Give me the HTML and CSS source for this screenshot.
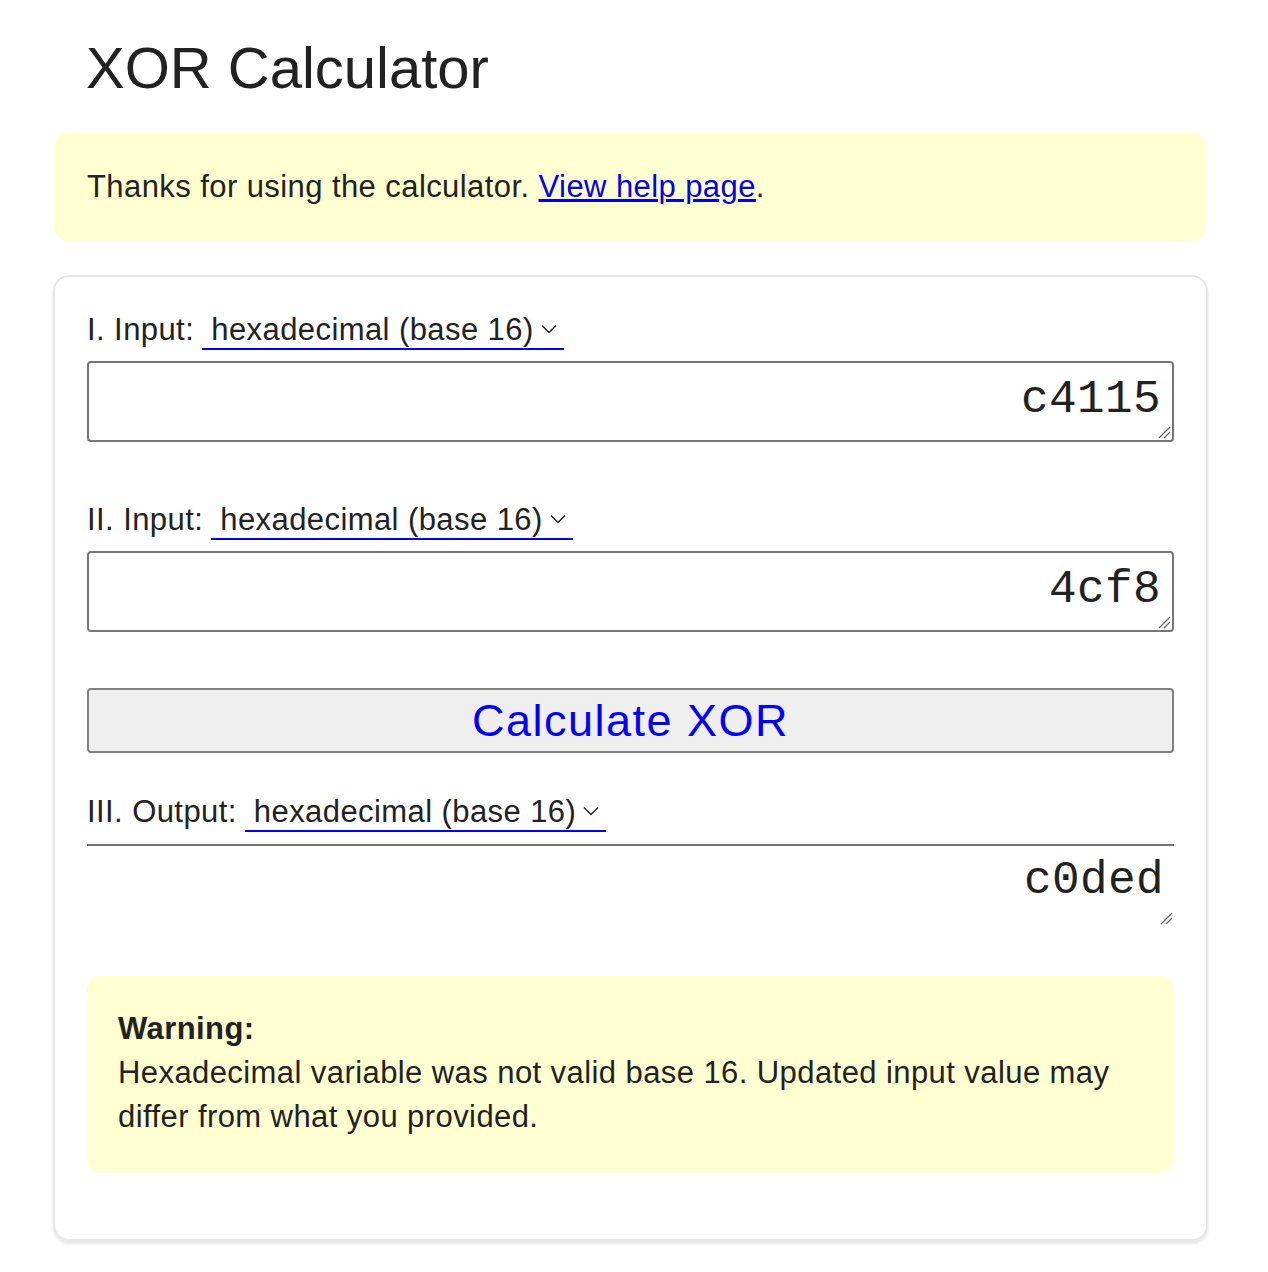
FILE: index.html
```html
<!DOCTYPE html>
<html lang="en">
<head>
<meta charset="utf-8">
<title>XOR Calculator</title>
<link rel="stylesheet" href="styles.css">
</head>
<body>
<main class="page">
  <h1 class="title">XOR Calculator</h1>
  <div class="notice">Thanks for using the calculator. <a href="#" class="link">View help page</a>.</div>
  <section class="card">
    <div class="field-row">
      <span class="label">I. Input:</span>
      <span class="select">hexadecimal (base 16)<svg class="chev" width="16" height="10" viewBox="0 0 16 10"><polyline points="1,1.5 8,8.5 15,1.5" fill="none" stroke="#222" stroke-width="1.5"/></svg></span>
    </div>
    <div class="box-wrap">
      <textarea class="box" spellcheck="false">c4115</textarea>
      <svg class="grip" width="14" height="14" viewBox="0 0 14 14"><path d="M13 2 L2 13 M13 7 L7 13" stroke="#6b6b6b" stroke-width="1.4"/></svg>
    </div>

    <div class="field-row second">
      <span class="label">II. Input:</span>
      <span class="select">hexadecimal (base 16)<svg class="chev" width="16" height="10" viewBox="0 0 16 10"><polyline points="1,1.5 8,8.5 15,1.5" fill="none" stroke="#222" stroke-width="1.5"/></svg></span>
    </div>
    <div class="box-wrap">
      <textarea class="box" spellcheck="false">4cf8</textarea>
      <svg class="grip" width="14" height="14" viewBox="0 0 14 14"><path d="M13 2 L2 13 M13 7 L7 13" stroke="#6b6b6b" stroke-width="1.4"/></svg>
    </div>

    <button class="calc" type="button">Calculate XOR</button>

    <div class="field-row third">
      <span class="label">III. Output:</span>
      <span class="select">hexadecimal (base 16)<svg class="chev" width="16" height="10" viewBox="0 0 16 10"><polyline points="1,1.5 8,8.5 15,1.5" fill="none" stroke="#222" stroke-width="1.5"/></svg></span>
    </div>
    <div class="box-wrap">
      <textarea class="output" spellcheck="false" readonly>c0ded</textarea>
      <svg class="grip out" width="14" height="14" viewBox="0 0 14 14"><path d="M13 2 L2 13 M13 7 L7 13" stroke="#6b6b6b" stroke-width="1.4"/></svg>
    </div>

    <div class="warning">
      <strong class="warn-title">Warning:</strong><br>
      Hexadecimal variable was not valid base 16. Updated input value may differ from what you provided.
    </div>
  </section>
</main>
</body>
</html>
```

FILE: styles.css
```css
* { box-sizing: border-box; }

body {
  margin: 0;
  background: #ffffff;
  color: #222222;
  font-family: "Liberation Sans", Arial, sans-serif;
}

.page {
  margin-left: 53px;
  width: 1155px;
  padding-bottom: 30px;
  letter-spacing: 0.42px;
}

.title {
  margin: 34px 0 0 0;
  padding-left: 33px;
  font-size: 58px;
  font-weight: 400;
  line-height: 67px;
  letter-spacing: 0;
  color: #222222;
}

.notice {
  margin: 32px 2px 0 1px;
  padding: 32px 33px;
  background: #ffffd1;
  border-radius: 14px;
  font-size: 31px;
  line-height: 44px;
}

.link {
  color: #0000ee;
  text-decoration: underline;
}

.card {
  margin-top: 34px;
  border: 2px solid #e6e6e6;
  border-radius: 16px;
  box-shadow: 0 3px 3px rgba(0, 0, 0, 0.10);
  padding: 31px 32px 66px 32px;
}

.field-row {
  font-size: 31px;
  line-height: 44px;
  margin-bottom: 9px;
}

.field-row.second { margin-top: 56px; }
.field-row.third { margin-top: 37px; margin-bottom: 10px; }

.select {
  display: inline-block;
  margin-left: -1px;
  padding: 0 7px 0 9px;
  line-height: 36px;
  border-bottom: 2px solid #0000ee;
  color: #222222;
}

.chev {
  margin-left: 7px;
  vertical-align: 6px;
}

.box-wrap {
  position: relative;
}

.box {
  display: block;
  width: 100%;
  height: 81px;
  margin: 0;
  padding: 11px 11px 0 8px;
  border: 2px solid #767676;
  border-radius: 4px;
  font-family: "Liberation Mono", "Courier New", monospace;
  font-size: 46px;
  line-height: 52px;
  letter-spacing: 0.4px;
  color: #222222;
  text-align: right;
  resize: none;
  overflow: hidden;
  background: #ffffff;
}

.grip {
  position: absolute;
  right: 3px;
  bottom: 3px;
}

.grip.out {
  right: 1px;
  bottom: 2px;
}

.calc {
  display: block;
  width: 100%;
  height: 65px;
  margin-top: 56px;
  padding: 0;
  border: 2px solid #808080;
  border-radius: 4px;
  background: #efefef;
  color: #0000ff;
  font-family: "Liberation Sans", Arial, sans-serif;
  font-size: 45px;
  line-height: 61px;
  letter-spacing: 1.5px;
  text-align: center;
}

.output {
  display: block;
  width: 100%;
  height: 83px;
  margin: 0;
  padding: 9px 10px 0 7px;
  border: none;
  border-top: 2px solid #767676;
  font-family: "Liberation Mono", "Courier New", monospace;
  font-size: 46px;
  line-height: 52px;
  letter-spacing: 0.4px;
  color: #222222;
  text-align: right;
  resize: none;
  overflow: hidden;
  background: #ffffff;
}

.warning {
  margin-top: 49px;
  padding: 31px 31px 34px 31px;
  background: #ffffd1;
  border-radius: 14px;
  font-size: 31px;
  line-height: 44px;
}

.warn-title {
  font-weight: 700;
}
```
